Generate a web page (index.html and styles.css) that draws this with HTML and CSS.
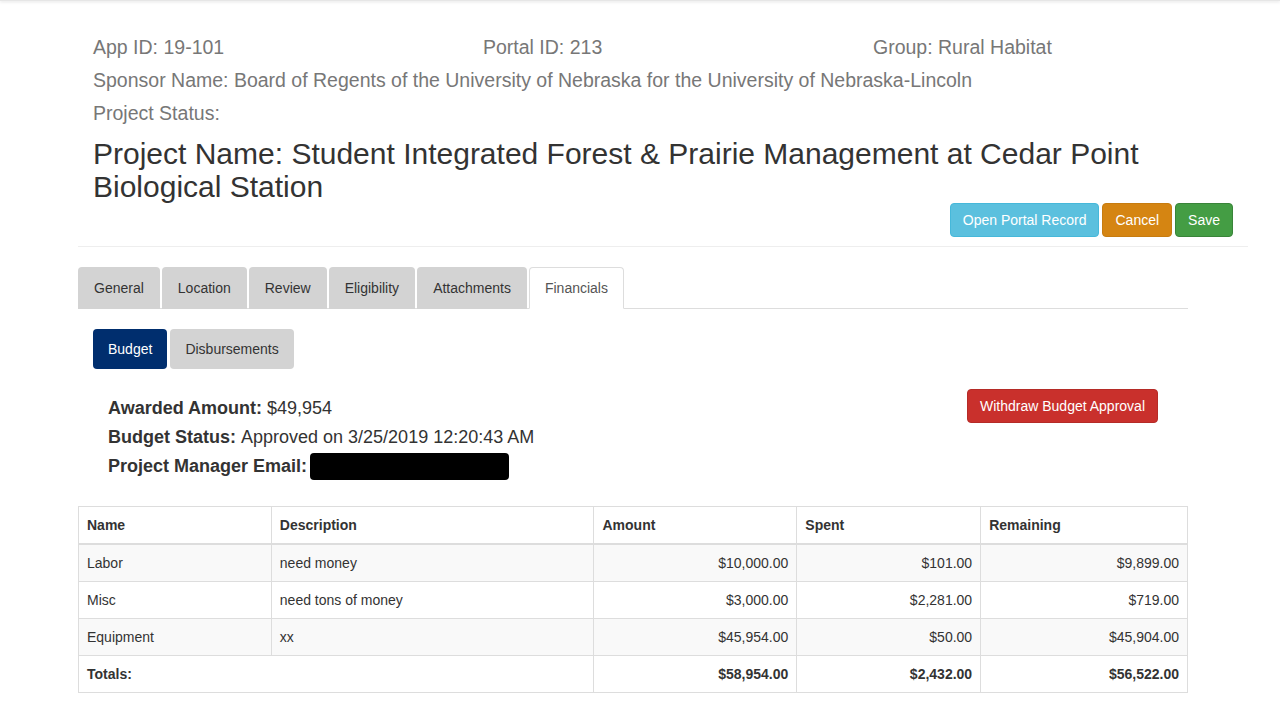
FILE: index.html
```html
<!DOCTYPE html>
<html>
<head>
<meta charset="utf-8">
<title>Project</title>
<link rel="stylesheet" href="styles.css">
</head>
<body>
<div class="topbar"></div>
<div class="container">
  <div class="header">
    <div class="meta-row">
      <div class="meta">App ID: 19-101</div>
      <div class="meta">Portal ID: 213</div>
      <div class="meta">Group: Rural Habitat</div>
    </div>
    <div class="meta">Sponsor Name: Board of Regents of the University of Nebraska for the University of Nebraska-Lincoln</div>
    <div class="meta">Project Status:</div>
    <h2 class="title">Project Name: Student Integrated Forest &amp; Prairie Management at Cedar Point Biological Station</h2>
    <div class="actions">
      <button class="btn btn-info">Open Portal Record</button>
      <button class="btn btn-warning">Cancel</button>
      <button class="btn btn-success">Save</button>
    </div>
  </div>
  <hr class="divider">
  <div class="content">
    <ul class="tabs">
      <li class="tab">General</li>
      <li class="tab">Location</li>
      <li class="tab">Review</li>
      <li class="tab">Eligibility</li>
      <li class="tab">Attachments</li>
      <li class="tab active">Financials</li>
    </ul>
    <ul class="pills">
      <li class="pill active">Budget</li>
      <li class="pill">Disbursements</li>
    </ul>
    <div class="budget-row">
      <div class="budget-info">
        <h4 class="info-line"><strong>Awarded Amount:</strong>&nbsp;$49,954</h4>
        <h4 class="info-line"><strong>Budget Status:</strong>&nbsp;Approved on 3/25/2019 12:20:43 AM</h4>
        <h4 class="info-line"><strong>Project Manager Email:</strong><span class="redacted"></span></h4>
      </div>
      <button class="btn btn-danger">Withdraw Budget Approval</button>
    </div>
    <table class="budget-table">
      <thead>
        <tr>
          <th class="c-name">Name</th>
          <th class="c-desc">Description</th>
          <th class="c-amt">Amount</th>
          <th class="c-spent">Spent</th>
          <th class="c-rem">Remaining</th>
        </tr>
      </thead>
      <tbody>
        <tr class="odd">
          <td>Labor</td><td>need money</td><td class="num">$10,000.00</td><td class="num">$101.00</td><td class="num">$9,899.00</td>
        </tr>
        <tr>
          <td>Misc</td><td>need tons of money</td><td class="num">$3,000.00</td><td class="num">$2,281.00</td><td class="num">$719.00</td>
        </tr>
        <tr class="odd">
          <td>Equipment</td><td>xx</td><td class="num">$45,954.00</td><td class="num">$50.00</td><td class="num">$45,904.00</td>
        </tr>
        <tr class="totals">
          <td colspan="2">Totals:</td><td class="num">$58,954.00</td><td class="num">$2,432.00</td><td class="num">$56,522.00</td>
        </tr>
      </tbody>
    </table>
  </div>
</div>
</body>
</html>
```
FILE: styles.css
```css
* { box-sizing: border-box; }
html, body { margin: 0; padding: 0; }
body {
  font-family: "Liberation Sans", Arial, Helvetica, sans-serif;
  font-size: 14px;
  line-height: 20px;
  color: #333;
  background: #fff;
}
.topbar {
  height: 1px;
  background: #e6e6e6;
  box-shadow: 0 1px 3px rgba(0,0,0,0.18);
}
.container {
  width: 1170px;
  margin-left: 78px;
  padding-top: 35px;
}
.header { padding: 0 15px; }
.meta-row {
  display: grid;
  grid-template-columns: 390px 390px 360px;
}
.meta {
  font-size: 19.5px;
  line-height: 22px;
  color: #777;
  margin-bottom: 11px;
}
.title {
  font-size: 30px;
  line-height: 33px;
  font-weight: 400;
  color: #333;
  margin: 13px 0 0;
  max-width: 1140px;
}
.actions {
  display: flex;
  justify-content: flex-end;
  gap: 3px;
}
.btn {
  font-family: inherit;
  font-size: 14px;
  line-height: 20px;
  padding: 6px 12px;
  border: 1px solid transparent;
  border-radius: 4px;
  color: #fff;
  cursor: pointer;
}
.btn-info { background: #5bc0de; border-color: #46b8da; }
.btn-warning { background: #d58512; border-color: #c77c10; }
.btn-success { background: #449d44; border-color: #398439; }
.btn-danger { background: #c9302c; border-color: #b52b27; }
.divider {
  border: 0;
  border-top: 1px solid #eee;
  margin: 9px 0 20px;
}
.content { width: 1110px; }
.tabs {
  list-style: none;
  margin: 0;
  padding: 0;
  display: flex;
  border-bottom: 1px solid #ddd;
}
.tab {
  padding: 10px 15px;
  line-height: 20px;
  margin-right: 2px;
  margin-bottom: -1px;
  background: #d3d3d3;
  border: 1px solid transparent;
  border-radius: 4px 4px 0 0;
  color: #333;
}
.tab.active {
  background: #fff;
  border-color: #ddd;
  border-bottom-color: transparent;
  color: #555;
}
.pills {
  list-style: none;
  margin: 20px 0 0;
  padding: 0 0 0 15px;
  display: flex;
  gap: 3px;
}
.pill {
  padding: 10px 15px;
  line-height: 20px;
  background: #d3d3d3;
  border-radius: 4px;
  color: #333;
}
.pill.active {
  background: #002e6e;
  color: #fff;
}
.budget-row {
  display: flex;
  justify-content: space-between;
  align-items: flex-start;
  margin-top: 20px;
  padding: 0 30px;
}
.info-line {
  font-size: 18px;
  line-height: 19px;
  font-weight: 400;
  margin: 10px 0;
  color: #333;
  display: flex;
  align-items: center;
}
.info-line strong { font-weight: 700; }
.redacted {
  display: inline-block;
  width: 199px;
  height: 27px;
  margin: -4px 0 -4px 3px;
  background: #000;
  border-radius: 4px;
}
.budget-table {
  margin-top: 20px;
  width: 1110px;
  border-collapse: collapse;
  border: 1px solid #ddd;
  font-size: 14px;
}
.budget-table th, .budget-table td {
  padding: 8px;
  line-height: 20px;
  border: 1px solid #ddd;
  text-align: left;
  vertical-align: top;
}
.budget-table th {
  border-bottom: 2px solid #ddd;
  font-weight: 700;
}
.c-name { width: 193px; }
.c-desc { width: 323px; }
.c-amt { width: 203px; }
.c-spent { width: 184px; }
.c-rem { width: 207px; }
.budget-table td.num { text-align: right; }
.budget-table tr.odd td { background: #f9f9f9; }
.budget-table tr.totals td { font-weight: 700; }
```
